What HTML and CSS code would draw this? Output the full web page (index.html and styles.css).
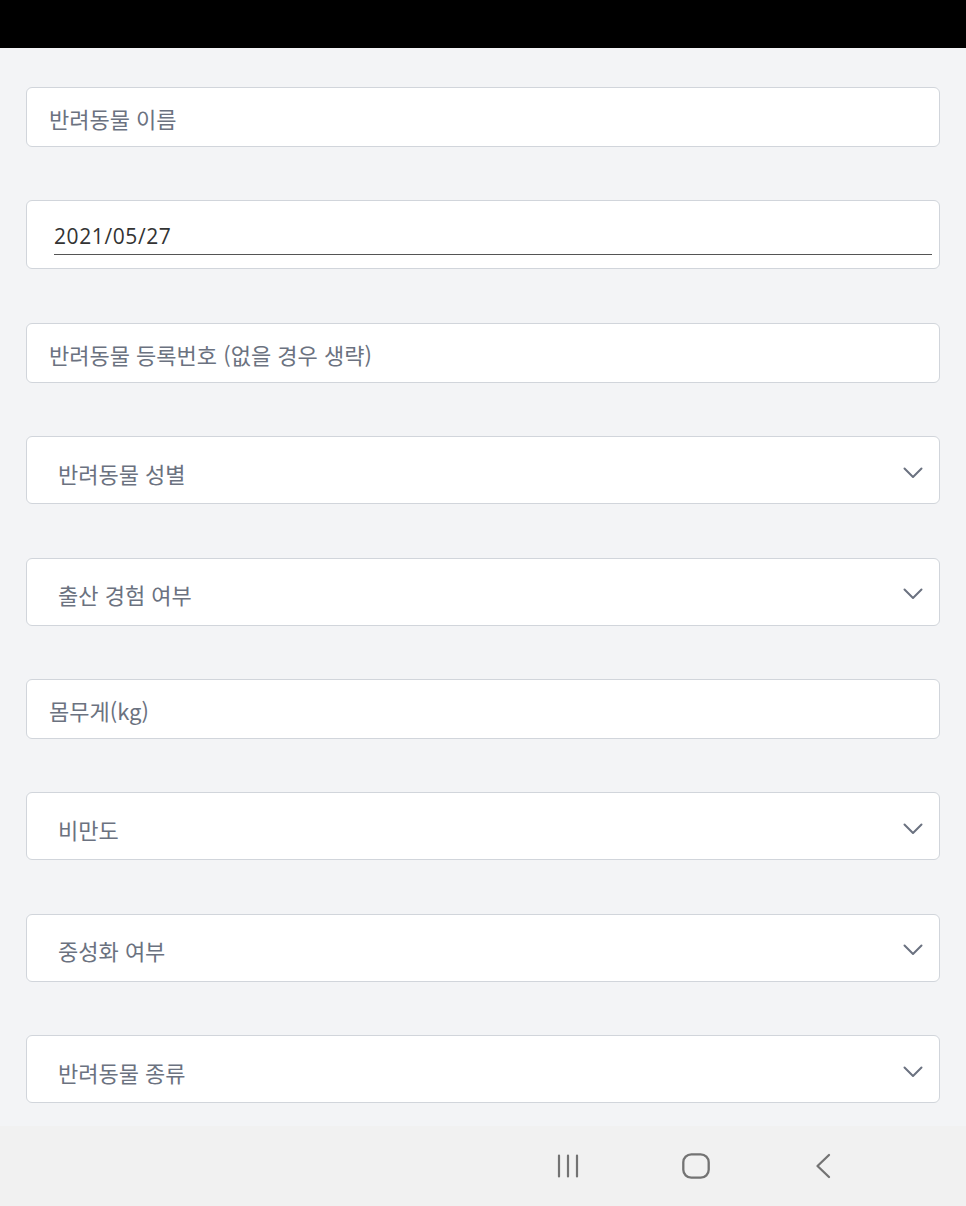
FILE: index.html
```html
<!DOCTYPE html>
<html lang="ko">
<head>
<meta charset="utf-8">
<title>반려동물 등록</title>
<link rel="stylesheet" href="styles.css">
</head>
<body>
<div class="screen">
  <div class="status"></div>
  <main class="form">
    <div class="field text"><span class="ph">반려동물 이름</span></div>
    <div class="field date"><div class="date-input"><span class="val">2021/05/27</span></div></div>
    <div class="field text"><span class="ph">반려동물 등록번호 (없을 경우 생략)</span></div>
    <div class="field select"><span class="ph">반려동물 성별</span><svg class="chev" viewBox="0 0 20 12" width="20" height="12"><path d="M1.5 1.5 L10 10 L18.5 1.5" fill="none" stroke="#6b7280" stroke-width="2" stroke-linecap="round" stroke-linejoin="round"/></svg></div>
    <div class="field select"><span class="ph">출산 경험 여부</span><svg class="chev" viewBox="0 0 20 12" width="20" height="12"><path d="M1.5 1.5 L10 10 L18.5 1.5" fill="none" stroke="#6b7280" stroke-width="2" stroke-linecap="round" stroke-linejoin="round"/></svg></div>
    <div class="field text"><span class="ph">몸무게(kg)</span></div>
    <div class="field select"><span class="ph">비만도</span><svg class="chev" viewBox="0 0 20 12" width="20" height="12"><path d="M1.5 1.5 L10 10 L18.5 1.5" fill="none" stroke="#6b7280" stroke-width="2" stroke-linecap="round" stroke-linejoin="round"/></svg></div>
    <div class="field select"><span class="ph">중성화 여부</span><svg class="chev" viewBox="0 0 20 12" width="20" height="12"><path d="M1.5 1.5 L10 10 L18.5 1.5" fill="none" stroke="#6b7280" stroke-width="2" stroke-linecap="round" stroke-linejoin="round"/></svg></div>
    <div class="field select"><span class="ph">반려동물 종류</span><svg class="chev" viewBox="0 0 20 12" width="20" height="12"><path d="M1.5 1.5 L10 10 L18.5 1.5" fill="none" stroke="#6b7280" stroke-width="2" stroke-linecap="round" stroke-linejoin="round"/></svg></div>
  </main>
  <nav class="navbar">
    <svg class="nav-icon" viewBox="0 0 24 24" width="24" height="24"><path d="M3 1.5 V22.5 M12 1.5 V22.5 M21 1.5 V22.5" stroke="#737373" stroke-width="2.2" stroke-linecap="round" fill="none"/></svg>
    <svg class="nav-icon" viewBox="0 0 28 26" width="28" height="26"><rect x="1.3" y="1.3" width="25.4" height="23.4" rx="8" ry="8" fill="none" stroke="#737373" stroke-width="2.3"/></svg>
    <svg class="nav-icon" viewBox="0 0 18 26" width="18" height="26"><path d="M15 2 L3.5 13 L15 24" fill="none" stroke="#737373" stroke-width="2.3" stroke-linecap="round" stroke-linejoin="round"/></svg>
  </nav>
</div>
</body>
</html>
```
FILE: styles.css
```css
* { box-sizing: border-box; }
html, body { margin: 0; padding: 0; }
body {
  background: #f3f4f6;
  font-family: "Noto Sans CJK KR", "Noto Sans", sans-serif;
}
.screen {
  width: 966px;
  height: 1206px;
  display: flex;
  flex-direction: column;
  overflow: hidden;
}
.status {
  height: 48px;
  background: #000;
  flex: none;
}
.form {
  flex: 1;
  padding: 39px 26px 0 26px;
  display: flex;
  flex-direction: column;
  gap: 53.4px;
}
.field {
  background: #fff;
  border: 1px solid #d1d5db;
  border-radius: 6px;
  display: flex;
  align-items: center;
  flex: none;
}
.field.text {
  height: 60px;
  padding-left: 22px;
}
.field.select {
  height: 68px;
  padding-left: 31px;
  padding-right: 16px;
  justify-content: space-between;
}
.field.date {
  height: 69px;
  align-items: flex-start;
  padding: 18px 7px 0 27px;
}
.ph {
  font-size: 22px;
  color: #6b7280;
  line-height: 1;
}
.field.text .ph { margin-top: 2px; }
.field.select .ph { margin-top: 5px; }
.chev {
  display: block;
  margin-top: 5px;
}
.date-input {
  width: 100%;
  height: 36px;
  border-bottom: 1.5px solid #555;
  display: flex;
  align-items: center;
}
.val {
  font-family: "Open Sans", "Noto Sans", sans-serif;
  font-size: 21px;
  color: #333;
  letter-spacing: 0.6px;
  line-height: 1;
}
.navbar {
  height: 80px;
  flex: none;
  background: #f1f1f1;
  display: flex;
  align-items: center;
  padding-left: 556px;
}
.nav-icon { display: block; }
.navbar .nav-icon:nth-child(1) { margin-right: 102px; }
.navbar .nav-icon:nth-child(2) { margin-right: 104px; }
```
